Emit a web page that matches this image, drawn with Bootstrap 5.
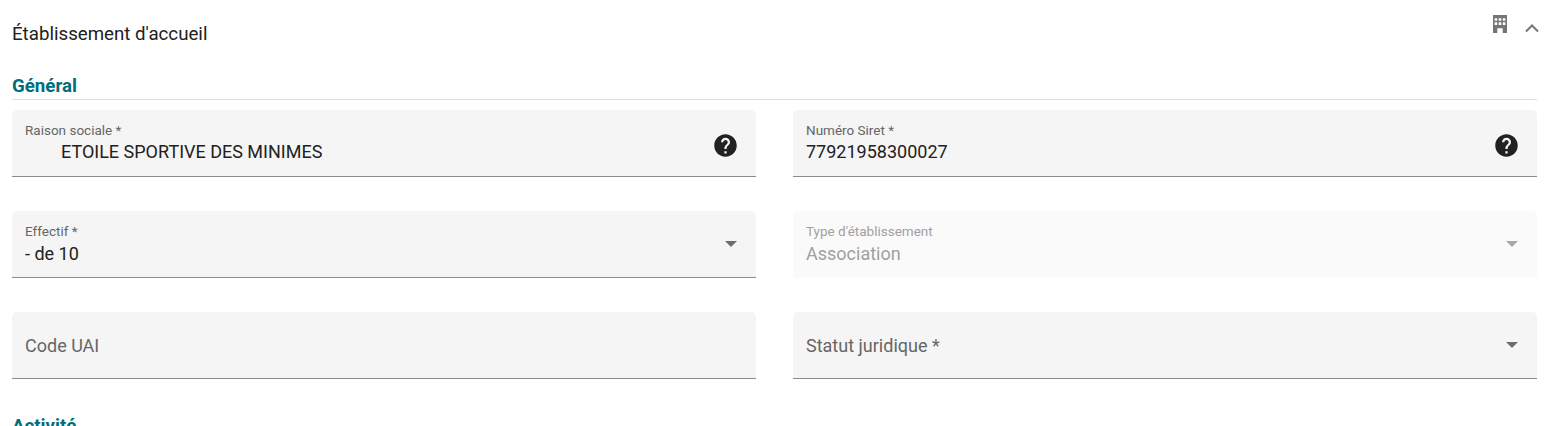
<!DOCTYPE html>
<html lang="fr">
<head>
  <meta charset="UTF-8" />
  <meta name="viewport" content="width=device-width, initial-scale=1" />
  <title>Établissement d'accueil</title>
  <link href="https://cdn.jsdelivr.net/npm/bootstrap@5.3.3/dist/css/bootstrap.min.css" rel="stylesheet" />
  <style>
    html, body {
      height: 426px;
      overflow: hidden;
    }
    body {
      background-color: #fff;
      color: #212121;
      font-family: Roboto, sans-serif;
    }
    .page-wrap {
      padding: 0 11px 0 12px;
    }
    .panel-head {
      height: 66px;
    }
    .panel-title {
      font-size: 18.7px;
      line-height: 24px;
      padding-top: 22px;
    }
    .panel-icons {
      margin-right: -6.5px;
      padding-top: 12px;
      gap: 7.5px;
    }
    .section-title {
      color: #006d7d;
      font-size: 18.7px;
      font-weight: 700;
      line-height: 24px;
      border-bottom: 1px solid #ddd;
      margin: 0 0 10px;
      padding-top: 8px;
      box-sizing: content-box;
      height: 25px;
    }
    .field-row {
      --bs-gutter-x: 37px;
      --bs-gutter-y: 34px;
    }
    .mat-field {
      height: 67px;
      background: #f5f5f5;
      border-radius: 5px 5px 0 0;
      border-bottom: 1px solid #8c8c8c;
      padding: 0 13px;
      position: relative;
    }
    .mat-label {
      color: #666;
      font-size: 13.5px;
      line-height: 16px;
      padding-top: 12px;
    }
    .mat-value {
      font-size: 18px;
      line-height: 24px;
      margin-top: 2px;
    }
    .value-low {
      margin-top: 3px;
    }
    .indent-value {
      padding-left: 36px;
    }
    .mat-empty {
      color: #666;
      font-size: 18px;
      line-height: 24px;
      padding-top: 22px;
    }
    .mat-field.is-disabled {
      background: #fafafa;
      border-bottom: 0;
    }
    .is-disabled .mat-label,
    .is-disabled .mat-value {
      color: #a0a0a0;
    }
    .help-icon {
      position: absolute;
      right: 17px;
      top: 22px;
    }
    .caret-down {
      position: absolute;
      right: 19px;
      top: 30px;
      width: 0;
      height: 0;
      border-left: 6.5px solid transparent;
      border-right: 6.5px solid transparent;
      border-top: 6.5px solid #6e6e6e;
    }
    .is-disabled .caret-down {
      border-top-color: #a8a8a8;
    }
    .next-section {
      margin-top: 27px;
    }
  </style>
</head>
<body>
  <div class="page-wrap">
    <div class="panel-head d-flex justify-content-between align-items-start">
      <div class="panel-title">Établissement d'accueil</div>
      <div class="panel-icons d-flex align-items-start">
        <svg width="24" height="24" viewBox="0 0 24 24" fill="#757575"><path fill-rule="evenodd" d="M5 3h14v18h-4.300v-4.700H9.300V21H5V3zm1.600 3.300v2.400h2.600V6.300H6.600zm4.100 0v2.400h2.600V6.300h-2.600zm4.100 0v2.400h2.600V6.300h-2.600zm-8.200 4v2.700h2.600v-2.700H6.600zm4.100 0v2.700h2.600v-2.700h-2.600zm4.100 0v2.700h2.600v-2.700h-2.600z"/></svg>
        <svg class="mt-1" width="24" height="24" viewBox="0 0 24 24" fill="none" stroke="#757575" stroke-width="2"><path d="M6 15.500l6-6 6 6"/></svg>
      </div>
    </div>

    <div class="section-title">Général</div>
    <div class="row field-row">
      <div class="col-6">
        <div class="mat-field">
          <div class="mat-label">Raison sociale *</div>
          <div class="mat-value indent-value">ETOILE SPORTIVE DES MINIMES</div>
          <svg class="help-icon" width="27" height="27" viewBox="0 0 24 24" fill="#212121"><path d="M12 2C6.480 2 2 6.480 2 12s4.480 10 10 10 10-4.480 10-10S17.520 2 12 2zm1 17h-2v-2h2v2zm2.070-7.750l-.900.920C13.450 12.900 13 13.500 13 15h-2v-.500c0-1.100.450-2.100 1.170-2.830l1.240-1.260c.370-.360.590-.860.590-1.410 0-1.100-.900-2-2-2s-2 .900-2 2H8c0-2.210 1.790-4 4-4s4 1.790 4 4c0 .880-.360 1.680-.930 2.250z"/></svg>
        </div>
      </div>
      <div class="col-6">
        <div class="mat-field">
          <div class="mat-label">Numéro Siret *</div>
          <div class="mat-value">77921958300027</div>
          <svg class="help-icon" width="27" height="27" viewBox="0 0 24 24" fill="#212121"><path d="M12 2C6.480 2 2 6.480 2 12s4.480 10 10 10 10-4.480 10-10S17.520 2 12 2zm1 17h-2v-2h2v2zm2.070-7.750l-.900.920C13.450 12.900 13 13.500 13 15h-2v-.500c0-1.100.450-2.100 1.170-2.830l1.240-1.260c.370-.360.590-.860.590-1.410 0-1.100-.900-2-2-2s-2 .900-2 2H8c0-2.210 1.790-4 4-4s4 1.790 4 4c0 .880-.360 1.680-.930 2.250z"/></svg>
        </div>
      </div>
      <div class="col-6">
        <div class="mat-field">
          <div class="mat-label">Effectif *</div>
          <div class="mat-value value-low">- de 10</div>
          <span class="caret-down"></span>
        </div>
      </div>
      <div class="col-6">
        <div class="mat-field is-disabled">
          <div class="mat-label">Type d'établissement</div>
          <div class="mat-value value-low">Association</div>
          <span class="caret-down"></span>
        </div>
      </div>
      <div class="col-6">
        <div class="mat-field">
          <div class="mat-empty">Code UAI</div>
        </div>
      </div>
      <div class="col-6">
        <div class="mat-field">
          <div class="mat-empty">Statut juridique *</div>
          <span class="caret-down"></span>
        </div>
      </div>
    </div>
    <div class="section-title next-section">Activité</div>
  </div>
  <script src="https://cdn.jsdelivr.net/npm/bootstrap@5.3.3/dist/js/bootstrap.bundle.min.js"></script>
</body>
</html>
